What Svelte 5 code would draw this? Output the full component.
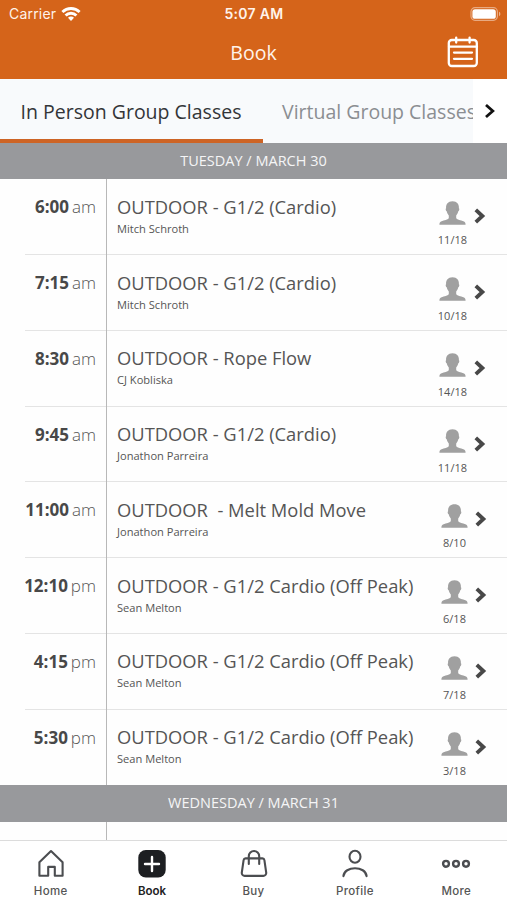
<script>
  const tabs = ['In Person Group Classes', 'Virtual Group Classes'];
  let activeTab = $state(0);
  let activeNav = $state('Book');

  const classes = [
    { time: '6:00', period: 'am', name: 'OUTDOOR - G1/2 (Cardio)', coach: 'Mitch Schroth', spots: '11/18' },
    { time: '7:15', period: 'am', name: 'OUTDOOR - G1/2 (Cardio)', coach: 'Mitch Schroth', spots: '10/18' },
    { time: '8:30', period: 'am', name: 'OUTDOOR - Rope Flow', coach: 'CJ Kobliska', spots: '14/18' },
    { time: '9:45', period: 'am', name: 'OUTDOOR - G1/2 (Cardio)', coach: 'Jonathon Parreira', spots: '11/18' },
    { time: '11:00', period: 'am', name: 'OUTDOOR  - Melt Mold Move', coach: 'Jonathon Parreira', spots: '8/10' },
    { time: '12:10', period: 'pm', name: 'OUTDOOR - G1/2 Cardio (Off Peak)', coach: 'Sean Melton', spots: '6/18' },
    { time: '4:15', period: 'pm', name: 'OUTDOOR - G1/2 Cardio (Off Peak)', coach: 'Sean Melton', spots: '7/18' },
    { time: '5:30', period: 'pm', name: 'OUTDOOR - G1/2 Cardio (Off Peak)', coach: 'Sean Melton', spots: '3/18' }
  ];

  const navItems = ['Home', 'Book', 'Buy', 'Profile', 'More'];
</script>

<div class="app">
  <header>
    <div class="status">
      <div class="carrier">
        <span>Carrier</span>
        <svg width="20" height="14" viewBox="0 0 20 14" fill="none" stroke="#fff" stroke-width="2.9">
          <path d="M1.4 5a12.4 12.4 0 0 1 17.2 0" />
          <path d="M4.6 8.5a7.6 7.6 0 0 1 10.8 0" />
          <path d="M7 10.8a4.2 4.2 0 0 1 6 0L10 13.900z" fill="#fff" stroke="none" />
        </svg>
      </div>
      <div class="clock">5:07 AM</div>
      <svg class="battery" width="32" height="14" viewBox="0 0 32 14">
        <rect x="1" y="0.7" width="26.4" height="12.6" rx="4" fill="none" stroke="#fff" stroke-opacity="0.45" stroke-width="1.2" />
        <rect x="2.4" y="2.2" width="23.4" height="9.6" rx="2.6" fill="#fff" />
        <path d="M29 4.800c1.800.6 1.800 3.800 0 4.400z" fill="#fff" fill-opacity="0.5" />
      </svg>
    </div>
    <div class="title-bar">
      <h1>Book</h1>
      <button type="button" class="calendar" aria-label="Calendar">
        <svg width="32" height="32" viewBox="0 0 32 32" fill="none" stroke="#fff" stroke-width="2.3" stroke-linecap="round">
          <rect x="1.8" y="4" width="28" height="26" rx="3" />
          <path d="M2 10.6h28M9.2 1.6v5M22.6 1.6v5M7 16.6h18M7 22.8h18" />
        </svg>
      </button>
    </div>
  </header>

  <div class="tabs">
    <div class="tab-list">
      {#each tabs as tab, i}
        <button type="button" class="tab" class:active={activeTab === i} onclick={() => (activeTab = i)}>
          {tab}
        </button>
      {/each}
    </div>
    <button type="button" class="tab-next" aria-label="Next">
      <svg width="12" height="16" viewBox="0 0 12 16" fill="none" stroke="#111" stroke-width="2.8">
        <path d="M2 2l6.8 6L2 14" />
      </svg>
    </button>
  </div>

  <main>
    <div class="day">TUESDAY / MARCH 30</div>
    {#each classes as item}
      <div class="class-row">
        <div class="time"><b>{item.time}</b><span>{item.period}</span></div>
        <div class="info">
          <div class="name">{item.name}</div>
          <div class="coach">{item.coach}</div>
        </div>
        <div class="spots">
          <svg width="27" height="24" viewBox="0 0 27 24" fill="#a0a0a0">
            <path d="M13.500.3c4.500 0 6.700 2.900 6.400 6.900.8.4.4 2.700-.6 3.100-.4 1.800-1.100 3.100-2.100 4.100v2.800c1.200 1.500 4.600 2 7.200 3 1.600.6 2.200 1.500 2.200 3.500H.4c0-2 .6-2.900 2.200-3.500 2.600-1 6-1.500 7.200-3v-2.800c-1-1-1.700-2.300-2.100-4.100-1-.4-1.400-2.700-.6-3.100-.3-4 1.900-6.900 6.400-6.900z" />
          </svg>
          <span>{item.spots}</span>
        </div>
        <svg class="arrow" width="12" height="16" viewBox="0 0 12 16" fill="none" stroke="#484848" stroke-width="3.8">
          <path d="M1.8 1.9L8.4 8l-6.6 6.1" />
        </svg>
      </div>
    {/each}
    <div class="day">WEDNESDAY / MARCH 31</div>
    <div class="class-row next-day"><div class="time"></div></div>
  </main>

  <nav>
    {#each navItems as item}
      <button type="button" class="nav-item" class:selected={activeNav === item} onclick={() => (activeNav = item)}>
        <svg width="30" height="30" viewBox="0 0 30 30" fill="none" stroke="#4b4d50" stroke-width="2.1" stroke-linejoin="round">
          {#if item === 'Home'}
            <path d="M3.4 13.2L15 2l11.600 11.200V26.800h-7.800v-8.900h-6.600v8.900H3.400z" />
          {:else if item === 'Book'}
            <rect x="1.3" y="1.1" width="27.400" height="27.400" rx="7.500" fill="#1d1f22" stroke="none" />
            <path d="M15 8v14M8 15h14" stroke="#fff" stroke-width="2.400" stroke-linecap="round" />
          {:else if item === 'Buy'}
            <path d="M6.600 9.400h16.800a2 2 0 0 1 2 1.700l1.800 12.500a2.900 2.900 0 0 1-2.900 3.300H5.700a2.900 2.900 0 0 1-2.900-3.300l1.800-12.500a2 2 0 0 1 2-1.700z" />
            <path d="M9.800 15V7.200a5.200 5.200 0 0 1 10.400 0V15" stroke-linecap="round" />
          {:else if item === 'Profile'}
            <ellipse cx="15" cy="7.800" rx="5.500" ry="6" />
            <path d="M3.400 27.200c.8-10.600 22.400-10.600 23.200 0" stroke-linecap="round" />
          {:else}
            <circle cx="5" cy="14.800" r="2.900" stroke-width="2.400" />
            <circle cx="15" cy="14.800" r="2.900" stroke-width="2.400" />
            <circle cx="25" cy="14.800" r="2.900" stroke-width="2.400" />
          {/if}
        </svg>
        <span>{item}</span>
      </button>
    {/each}
  </nav>
</div>

<style>
  :global(body) {
    background: #fff;
  }

  .app {
    display: flex;
    flex-direction: column;
    width: 507px;
    height: 900px;
    overflow: hidden;
    background: #fefefe;
    font-family: 'Open Sans', sans-serif;
    color: #555;
  }

  button {
    padding: 0;
    border: none;
    background: none;
    font: inherit;
    color: inherit;
    cursor: pointer;
  }

  svg {
    display: block;
  }

  header {
    flex: none;
    height: 79px;
    background: #d5641a;
    color: #fff3ea;
  }

  .status {
    display: grid;
    grid-template-columns: 1fr auto 1fr;
    align-items: center;
    height: 27px;
    padding: 0 5px 0 9px;
    font-family: Inter, sans-serif;
    font-size: 14px;
  }

  .carrier {
    display: flex;
    align-items: center;
    gap: 5px;
    letter-spacing: 0.2px;
  }

  .clock {
    margin-right: 3px;
    font-weight: 600;
    letter-spacing: 0.3px;
  }

  .battery {
    justify-self: end;
  }

  .title-bar {
    display: grid;
    grid-template-columns: 1fr auto 1fr;
    align-items: center;
    height: 50px;
    padding: 0 28px;
  }

  h1 {
    grid-column: 2;
    margin: 0;
    font-size: 19.5px;
    font-weight: 400;
  }

  .calendar {
    justify-self: end;
  }

  .tabs {
    flex: none;
    display: flex;
    height: 64px;
    background: #f8fafc;
  }

  .tab-list {
    display: flex;
    width: 473px;
    overflow: hidden;
  }

  .tab {
    flex: none;
    padding: 4px 20px 0 19px;
    border-bottom: 4px solid transparent;
    font-size: 19.5px;
    color: #8b8e92;
    white-space: nowrap;
  }

  .tab.active {
    width: 263px;
    border-color: #cd6425;
    color: #333538;
  }

  .tab-next {
    flex: 1;
    display: flex;
    align-items: center;
    padding-left: 11px;
    background: #fff;
  }

  main {
    flex: 1;
    min-height: 0;
    overflow: hidden;
  }

  .day {
    height: 36.4px;
    line-height: 36px;
    background: #98999c;
    color: #f5f5f6;
    font-size: 14.5px;
    text-align: center;
  }

  .class-row {
    display: flex;
    height: 75.75px;
    background: linear-gradient(#e4e4e4, #e4e4e4) 25px 100% / 100% 1px no-repeat;
  }

  .class-row:nth-last-child(3) {
    background: none;
  }

  .time {
    display: flex;
    justify-content: flex-end;
    gap: 3px;
    width: 107px;
    padding: 15px 10px 0 0;
    box-sizing: border-box;
    flex: none;
    border-right: 1px solid #b8b8b8;
    font-size: 17px;
    line-height: 26px;
  }

  .time b {
    font-weight: 700;
    color: #484848;
  }

  .time span {
    font-weight: 300;
  }

  .info {
    flex: 1;
    padding: 14.6px 0 0 10px;
  }

  .name {
    font-size: 18.35px;
    line-height: 26px;
    white-space: pre;
  }

  .coach {
    font-size: 11.1px;
    line-height: 18px;
  }

  .spots {
    display: flex;
    flex-direction: column;
    align-items: center;
    padding-top: 22px;
    font-size: 11px;
  }

  .spots span {
    line-height: 16px;
    margin-top: 7px;
  }

  .arrow {
    margin: 29px 21px 0 7px;
  }

  .class-row:nth-child(n + 6) .arrow {
    margin-right: 20px;
  }

  nav {
    flex: none;
    display: flex;
    height: 59px;
    border-top: 1px solid #dcdcdc;
    background: #fff;
  }

  .nav-item {
    flex: 1;
    display: flex;
    flex-direction: column;
    align-items: center;
    padding-top: 8px;
    font-family: Inter, sans-serif;
    font-size: 11.5px;
    font-weight: 500;
    letter-spacing: 0.3px;
  }

  .nav-item span {
    line-height: 16px;
    margin-top: 4px;
  }

  .nav-item.selected {
    font-weight: 600;
    letter-spacing: 0;
    color: #222;
  }
</style>
